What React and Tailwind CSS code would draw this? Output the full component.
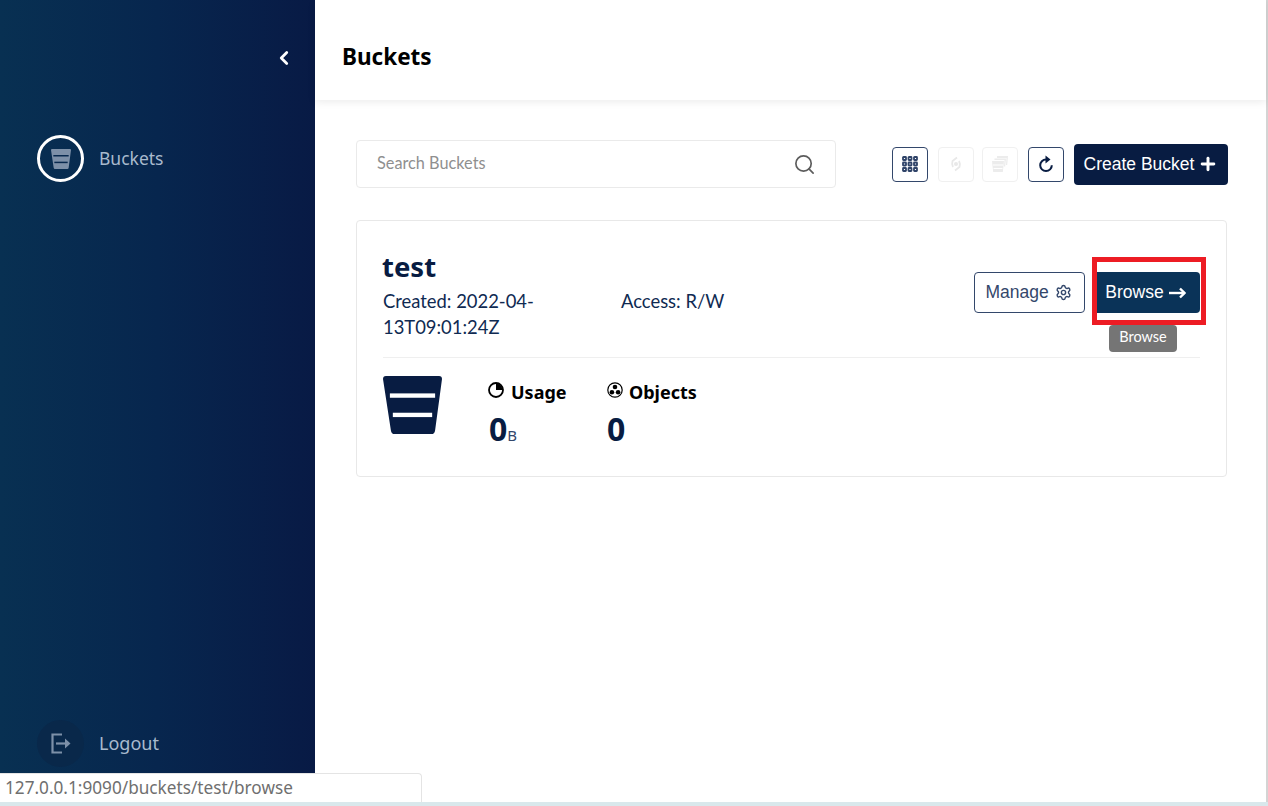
import { ChevronLeft, Search, Plus, Settings } from "lucide-react";

const navy = "#081c42";

function BucketIcon({ className, fill = "currentColor", bars = "#fff" }) {
  return (
    <svg viewBox="0 0 60 60" preserveAspectRatio="none" className={className}>
      <path d="M3 0h54q3 0 3 3l-7 53q-.5 4-4 4H12q-3.500 0-4-4L0 3q0-3 3-3z" fill={fill} />
      <rect x="7" y="18" width="46" height="4.500" fill={bars} />
      <rect x="10" y="38" width="40" height="4.500" fill={bars} />
    </svg>
  );
}

function GridIcon() {
  return (
    <svg viewBox="0 0 16 16" className="w-4 h-4" fill="none" stroke="#2f4368" strokeWidth="1.800">
      {[1, 6.5, 12].map((y) =>
        [1, 6.5, 12].map((x) => (
          <rect key={`${x}-${y}`} x={x} y={y} width="3" height="3" rx="0.5" />
        ))
      )}
    </svg>
  );
}

function ReplicationIcon() {
  return (
    <svg viewBox="0 0 16 16" className="w-4 h-4" fill="none" stroke="#e8e8e8" strokeWidth="1.800">
      <path d="M9 1.500L4.500 5Q3.500 8 5 11" />
      <path d="M7 14.500L11.500 11Q12.500 8 11 5" />
      <circle cx="8" cy="8" r="2" fill="#e8e8e8" stroke="none" />
    </svg>
  );
}

function MultiBucketIcon() {
  return (
    <svg viewBox="0 0 16 16" className="w-4 h-4" fill="#ececec">
      <path d="M5 0h11l-.8 9H14L14.500 2H5z" />
      <path d="M2.500 2.500H14l-.8 8h-1.200l.5-6.500H2.500z" />
      <path d="M0 5h12l-1.200 11H1.200z" />
      <rect x="1" y="8.500" width="10" height="1" fill="#fff" />
      <rect x="1.500" y="12" width="9" height="1" fill="#fff" />
    </svg>
  );
}

function RefreshIcon() {
  return (
    <svg viewBox="0 0 16 18" className="w-4 h-[18px]" fill="none">
      <path d="M8 4.500A5.800 5.800 0 1 0 13.800 10.300" stroke={navy} strokeWidth="2" />
      <path d="M7.500 0.500L12.500 4.500L7.500 8.500z" fill={navy} />
    </svg>
  );
}

function LogoutIcon() {
  return (
    <svg viewBox="0 0 20 21" className="w-5 h-[21px]" fill="none" stroke="#7d90a8" strokeWidth="2.200">
      <path d="M11 1.500H1.500v18H11" />
      <path d="M5 10.500h10" />
      <path d="M14 5.500l5.500 5-5.500 5z" fill="#7d90a8" stroke="none" />
    </svg>
  );
}

function LongArrow() {
  return (
    <svg viewBox="0 0 17 12" className="w-[17px] h-3" fill="none" stroke="#fff" strokeWidth="2.400">
      <path d="M0 6h15.500" />
      <path d="M11 1.500L15.500 6L11 10.500" />
    </svg>
  );
}

function UsageIcon() {
  return (
    <svg viewBox="0 0 16 16" className="w-4 h-4">
      <circle cx="8" cy="8" r="7" fill="none" stroke="#000" strokeWidth="1.800" />
      <path d="M8 8V1.500A6.500 6.500 0 0 1 14.500 8z" fill="#000" />
    </svg>
  );
}

function ObjectsIcon() {
  return (
    <svg viewBox="0 0 16 16" className="w-4 h-4">
      <circle cx="8" cy="8" r="7.200" fill="none" stroke="#000" strokeWidth="1.200" />
      <circle cx="8" cy="5" r="2.300" fill="#000" />
      <circle cx="4.900" cy="10.300" r="2.300" fill="#000" />
      <circle cx="11.100" cy="10.300" r="2.300" fill="#000" />
    </svg>
  );
}

function ToolButton({ children, disabled }) {
  return (
    <button
      className={`w-9 h-[35px] flex items-center justify-center rounded border bg-white ${
        disabled ? "border-[#f0f0f0]" : "border-[#33476b]"
      }`}
    >
      {children}
    </button>
  );
}

export default function App() {
  return (
    <div
      className="relative w-[1268px] h-[806px] overflow-hidden bg-white flex flex-col"
      style={{ fontFamily: "Lato, 'Noto Sans', sans-serif" }}
    >
      <div className="flex flex-1 min-h-0">
        {/* Sidebar */}
        <aside className="w-[315px] shrink-0 bg-gradient-to-r from-[#083052] via-[#07264e] to-[#081a45] flex flex-col text-[#a9bacd]">
          <div className="h-[116px] flex justify-end pt-[45px] pr-[20px]">
            <ChevronLeft className="w-[22px] h-[26px] text-white" strokeWidth={3} />
          </div>
          <div className="flex items-center gap-[15px] pl-[37px] mt-[19px]">
            <div className="w-[47px] h-[47px] rounded-full border-[3px] border-white flex items-center justify-center">
              <BucketIcon className="w-5 h-5" fill="#7d90a8" bars="#08294e" />
            </div>
            <span className="text-[17.500px]" style={{ fontFamily: "'Noto Sans', sans-serif" }}>Buckets</span>
          </div>
          <div className="mt-auto flex items-center gap-[15px] pl-[37px] h-[47px]">
            <div className="w-[47px] h-[47px] rounded-full bg-[#09284a] flex items-center justify-center">
              <LogoutIcon />
            </div>
            <span className="text-[18px]" style={{ fontFamily: "'Noto Sans', sans-serif" }}>Logout</span>
          </div>
          <div className="h-[35px]" />
        </aside>

        {/* Main */}
        <main className="flex-1 flex flex-col border-r-2 border-[#d4d4d4]">
          <header className="h-[100px] shrink-0 flex items-center pl-[27px] pt-[14px] shadow-[0_2px_8px_rgba(0,0,0,0.08)]">
            <h1 className="text-[22.500px] font-bold text-black" style={{ fontFamily: "'Noto Sans', sans-serif" }}>Buckets</h1>
          </header>

          <div className="pt-10 pl-[41px] pr-[38px]">
            {/* Toolbar */}
            <div className="flex items-center h-12">
              <div className="w-[480px] h-12 flex items-center justify-between border border-[#eaeaea] rounded pl-5 pr-[19px]">
                <span className="text-[16.300px] text-[#8f8f8f] -mt-[1px]">Search Buckets</span>
                <Search className="w-[23px] h-[23px] text-[#5c5c5c]" strokeWidth={1.75} />
              </div>
              <div className="ml-[56px] flex items-center">
                <ToolButton><GridIcon /></ToolButton>
                <div className="ml-[10px]"><ToolButton disabled><ReplicationIcon /></ToolButton></div>
                <div className="ml-2"><ToolButton disabled><MultiBucketIcon /></ToolButton></div>
                <div className="ml-[10px]"><ToolButton><RefreshIcon /></ToolButton></div>
                <button className="ml-[10px] w-[154px] h-[41px] rounded bg-[#081c42] text-white text-[17.500px] flex items-center justify-center gap-1" style={{ fontFamily: "'Liberation Sans', sans-serif" }}>
                  Create Bucket
                  <Plus className="w-5 h-5" strokeWidth={3.5} />
                </button>
              </div>
            </div>

            {/* Bucket card */}
            <section className="relative mt-8 w-[871px] h-[257px] border border-[#e8e8e8] rounded px-[26px]">
              <div className="flex h-[137px] border-b border-[#efefef]">
                <div className="w-[238px] pt-[25px]">
                  <h2 className="-ml-[1px] text-[27.500px] leading-[42px] font-bold" style={{ color: navy, fontFamily: "'Noto Sans', sans-serif" }}>test</h2>
                  <p className="text-[18.400px] leading-[26px] text-[#0f2a52]">Created: 2022-04-<br />13T09:01:24Z</p>
                </div>
                <div className="pt-[67px]">
                  <p className="text-[18.400px] leading-[26px] text-[#0f2a52]">Access: R/W</p>
                </div>
                <div className="ml-auto pt-[51px] flex gap-[7px] items-start">
                  <button className="w-[111px] h-[41px] rounded border border-[#33476b] text-[#33476b] text-[17.500px] flex items-center justify-center gap-[6px] pr-[2px]" style={{ fontFamily: "'Liberation Sans', sans-serif" }}>
                    Manage
                    <Settings className="w-[17px] h-[17px]" strokeWidth={2} />
                  </button>
                  <button className="w-[108px] h-[41px] rounded bg-[#0a3358] text-white text-[17.500px] flex items-center justify-center gap-[5px] whitespace-nowrap pr-[1px]" style={{ fontFamily: "'Liberation Sans', sans-serif" }}>
                    Browse
                    <LongArrow />
                  </button>
                </div>
              </div>

              <div className="flex pt-[18px]">
                <BucketIcon className="w-[59px] h-[58px]" fill={navy} bars="#fff" />
                <div className="ml-[46px] w-[119px]" style={{ fontFamily: "'Noto Sans', sans-serif" }}>
                  <div className="flex items-center gap-[7px] h-[34px] -mt-[1px]">
                    <span className="-mt-[5px]"><UsageIcon /></span>
                    <span className="text-[18px] font-bold text-black">Usage</span>
                  </div>
                  <div className="flex items-end leading-none ml-[1px]">
                    <span className="text-[32px] leading-[40px] font-bold" style={{ color: navy }}>0</span>
                    <span className="text-[15px] leading-[28px] text-[#33476b]">B</span>
                  </div>
                </div>
                <div style={{ fontFamily: "'Noto Sans', sans-serif" }}>
                  <div className="flex items-center gap-[6px] h-[34px] -mt-[1px]">
                    <span className="-mt-[5px]"><ObjectsIcon /></span>
                    <span className="text-[18px] font-bold text-black">Objects</span>
                  </div>
                  <div>
                    <span className="text-[32px] leading-[40px] font-bold" style={{ color: navy }}>0</span>
                  </div>
                </div>
              </div>

              {/* Highlight box around Browse + tooltip */}
              <div className="absolute left-[735px] top-[36px] w-[114px] h-[68px] border-[5px] border-[#ed1c24]" />
              <div className="absolute left-[752px] top-[104px] w-[68px] h-[27px] rounded bg-[#757575] text-white text-[14.500px] flex items-center justify-center pb-[3px]">
                Browse
              </div>
            </section>
          </div>
        </main>
      </div>

      <div className="h-1 shrink-0 bg-[#d9e8ec]" />

      {/* Browser status bar */}
      <div
        className="absolute left-0 bottom-[4px] w-[422px] h-[29px] bg-white border-t border-r border-[#e4e4e4] rounded-tr flex items-center pl-[5px] text-[17.200px] text-[#6f6f6f]"
        style={{ fontFamily: "'Noto Sans', sans-serif" }}
      >
        127.0.0.1:9090/buckets/test/browse
      </div>
    </div>
  );
}
